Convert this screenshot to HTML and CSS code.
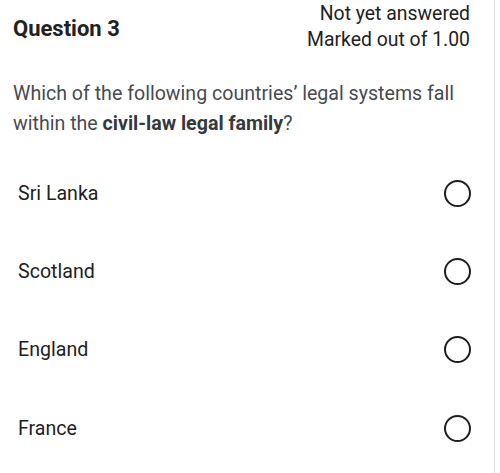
FILE: index.html
```html
<!DOCTYPE html>
<html>
<head>
<meta charset="utf-8">
<link rel="stylesheet" href="styles.css">
</head>
<body>
<div class="card">
  <div class="head">
    <h3 class="qno">Question 3</h3>
    <div class="state">
      <div>Not yet answered</div>
      <div>Marked out of 1.00</div>
    </div>
  </div>
  <p class="qtext">Which of the following countries’ legal systems fall within the <strong>civil-law legal family</strong>?</p>
  <div class="answers">
    <label class="opt"><span>Sri Lanka</span><span class="radio"></span></label>
    <label class="opt"><span>Scotland</span><span class="radio"></span></label>
    <label class="opt"><span>England</span><span class="radio"></span></label>
    <label class="opt"><span>France</span><span class="radio"></span></label>
  </div>
</div>
</body>
</html>
```
FILE: styles.css
```css
html, body {
  margin: 0;
  padding: 0;
  background: #ffffff;
}
body {
  font-family: Roboto, "Liberation Sans", sans-serif;
  color: #222;
  overflow: hidden;
}
.card {
  box-sizing: border-box;
  width: 505px;
  margin-left: -10px;
  margin-top: -16px;
  border: 1px solid #e4e4e4;
  border-radius: 16px;
  padding: 16px 24px 0 22px;
  min-height: 520px;
}
.head {
  display: flex;
  justify-content: space-between;
  align-items: flex-start;
}
.qno {
  margin: 15px 0 0 0;
  font-size: 22px;
  font-weight: 700;
  line-height: 26px;
  color: #222;
}
.state {
  text-align: right;
  font-size: 19.4px;
  line-height: 26px;
  color: #222;
}
.qtext {
  margin: 26px 0 0 0;
  font-size: 19.6px;
  line-height: 30px;
  color: #474b50;
}
.qtext strong {
  color: #35393e;
}
.answers {
  margin-top: 15px;
  padding-left: 5px;
}
.opt {
  display: flex;
  justify-content: space-between;
  align-items: center;
  height: 78.4px;
  font-size: 19.6px;
  color: #222;
}
.radio {
  box-sizing: border-box;
  width: 27px;
  height: 27px;
  margin-right: -1px;
  border: 2.5px solid #1e1e1e;
  border-radius: 50%;
}
```
